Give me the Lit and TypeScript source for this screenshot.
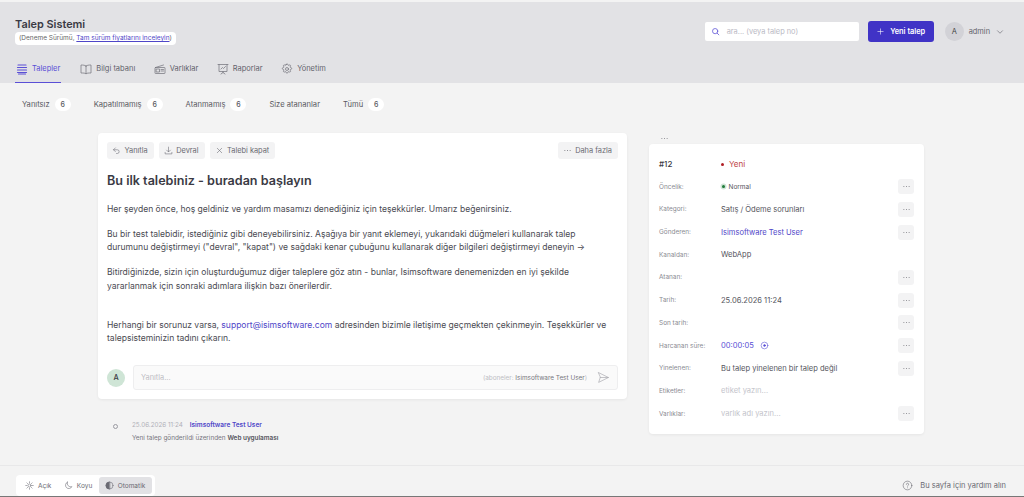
import { LitElement, html, css, svg } from 'lit';
import { customElement } from 'lit/decorators.js';

// ── Icons ─────────────────────────────────────────────────────────────────────

const icon = (size: number, body: unknown, sw = 1.5) => html`<svg
  width=${size}
  height=${size}
  viewBox="0 0 24 24"
  fill="none"
  stroke="currentColor"
  stroke-width=${sw}
  stroke-linecap="round"
  stroke-linejoin="round"
>${body}</svg>`;

const ICONS = {
  stack: svg`<path d="M4 4h16M3 9h18M3 14h18M3 19h18M5 22h14" stroke-width="2.4"/>`,
  book: svg`<path d="M12 6C10 4.500 7 4 2 4v16c5 0 8 0 10 1.500C14 20 17 20 22 20V4c-5 0-8 .5-10 2zM12 6v15.500"/>`,
  radio: svg`<rect x="2" y="9" width="20" height="12" rx="1"/><path d="M3 9l16-5M5 12h6v6H5zM14 13h5M14 16h5"/>`,
  chart: svg`<path d="M2 3h20M4 3v14h16V3M8 12l3-3 2 2 4-4M12 17v2M8 22l4-3 4 3"/>`,
  gear: svg`<circle cx="12" cy="12" r="3"/><path d="M10.300 3.300a1.700 1.700 0 0 1 3.400 0 1.700 1.700 0 0 0 2.600 1 1.700 1.700 0 0 1 2.400 2.400 1.700 1.700 0 0 0 1 2.600 1.700 1.700 0 0 1 0 3.400 1.700 1.700 0 0 0-1 2.600 1.700 1.700 0 0 1-2.400 2.400 1.700 1.700 0 0 0-2.600 1 1.700 1.700 0 0 1-3.400 0 1.700 1.700 0 0 0-2.600-1 1.700 1.700 0 0 1-2.400-2.400 1.700 1.700 0 0 0-1-2.600 1.700 1.700 0 0 1 0-3.400 1.700 1.700 0 0 0 1-2.600 1.700 1.700 0 0 1 2.400-2.400 1.700 1.700 0 0 0 2.600-1z"/>`,
  search: svg`<circle cx="11" cy="11" r="7"/><path d="M16.500 16.500L21 21"/>`,
  plus: svg`<path d="M12 5v14M5 12h14"/>`,
  chevron: svg`<path d="M6 9l6 6 6-6"/>`,
  reply: svg`<path d="M9 5L4 10l5 5M4 10h10a5 5 0 0 1 0 10h-2"/>`,
  download: svg`<path d="M12 3v12M7 11l5 5 5-5M3 17v4h18v-4"/>`,
  close: svg`<path d="M6 6l12 12M18 6L6 18"/>`,
  dots: svg`<path d="M5 12h.01M12 12h.01M19 12h.01" stroke-width="2.500"/>`,
  send: svg`<path d="M3 3l18 9-18 9 3-9zM6 12h15"/>`,
  sun: svg`<circle cx="12" cy="12" r="4"/><path d="M12 2v3M12 19v3M2 12h3M19 12h3M5 5l2 2M17 17l2 2M5 19l2-2M17 7l2-2"/>`,
  moon: svg`<path d="M9 3a9 9 0 1 0 12 12C13 17 7 11 9 3z"/>`,
  half: svg`<circle cx="12" cy="12" r="9.500"/><path d="M12 2.500a9.500 9.500 0 0 0 0 19z" fill="currentColor"/>`,
  help: svg`<circle cx="12" cy="12" r="9.500"/><path d="M9.500 9.500a2.500 2.500 0 1 1 3.500 2.300c-.7.4-1 .9-1 1.700M12 17h.01"/>`,
  timer: svg`<circle cx="12" cy="12" r="9"/><circle cx="12" cy="12" r="2.500" fill="currentColor"/>`,
};

const NAV = [
  { label: 'Talepler', icon: ICONS.stack, active: true },
  { label: 'Bilgi tabanı', icon: ICONS.book },
  { label: 'Varlıklar', icon: ICONS.radio },
  { label: 'Raporlar', icon: ICONS.chart },
  { label: 'Yönetim', icon: ICONS.gear },
];

const FILTERS = [
  { label: 'Yanıtsız', count: 6 },
  { label: 'Kapatılmamış', count: 6 },
  { label: 'Atanmamış', count: 6 },
  { label: 'Size atananlar' },
  { label: 'Tümü', count: 6 },
];

// ── AppRoot ───────────────────────────────────────────────────────────────────

@customElement('app-root')
export class AppRoot extends LitElement {
  static styles = css`
    :host {
      display: block;
      height: 497px;
      overflow: hidden;
      background: #f3f3f3;
      color: #3a3a44;
      font-family: Inter, 'Noto Sans', sans-serif;
      font-size: 8.55px;
    }

    .page {
      height: 497px;
      display: flex;
      flex-direction: column;
    }

    a {
      color: #4f46c8;
      text-decoration: none;
    }

    /* header */
    header {
      flex: none;
      height: 81px;
      margin-top: 2px;
      background: #e2e2e5;
      padding: 0 15px;
      display: flex;
      flex-direction: column;
    }

    .top {
      display: flex;
      justify-content: space-between;
      height: 53px;
    }

    .brand {
      padding-top: 15px;
    }

    .brand h1 {
      margin: 0;
      font-size: 10.9px;
      line-height: 15px;
      font-weight: 600;
      color: #3a3a44;
    }

    .trial {
      display: inline-block;
      background: #fff;
      border-radius: 4px;
      padding: 0 4px;
      font-size: 6.5px;
      line-height: 13px;
      color: #666;
    }

    .trial a {
      text-decoration: underline;
    }

    .tools {
      display: flex;
      align-items: center;
      gap: 9px;
      padding: 19px 4px 0 0;
      height: 21px;
    }

    .search {
      width: 154px;
      height: 19px;
      background: #fff;
      border-radius: 2px;
      display: flex;
      align-items: center;
      gap: 7px;
      padding-left: 6px;
      box-sizing: border-box;
      color: #b9b9c4;
      font-size: 7.4px;
    }

    .search svg {
      color: #5a4fd6;
    }

    .new {
      width: 66px;
      height: 21px;
      background: #4033c6;
      color: #fff;
      border-radius: 3px;
      display: flex;
      align-items: center;
      justify-content: center;
      gap: 5px;
      font-size: 7.4px;
      font-weight: 600;
    }

    .user {
      display: flex;
      align-items: center;
      gap: 5px;
      margin-left: 2px;
      font-size: 7.4px;
      color: #62626c;
    }

    .user .avatar {
      width: 19px;
      height: 19px;
      border-radius: 50%;
      background: #d2d2d7;
      display: grid;
      place-items: center;
      font-size: 7.4px;
      color: #444;
    }

    nav {
      display: flex;
      gap: 16.500px;
      height: 28px;
    }

    nav .tab {
      display: flex;
      align-items: center;
      gap: 4px;
      height: 27px;
      padding: 0 1px;
      font-size: 7.5px;
      color: #62626c;
    }

    nav .tab svg {
      color: #77777f;
    }

    nav .tab.active {
      margin-right: 1.500px;
      color: #5a4fd6;
      border-bottom: 1px solid #5a4fd6;
    }

    nav .tab.active svg {
      color: #5a4fd6;
    }

    /* filters */
    .filters {
      flex: none;
      display: flex;
      gap: 23px;
      padding: 13px 22px 0;
      height: 17px;
      font-size: 7.6px;
      color: #5a5a62;
    }

    .filter {
      display: flex;
      align-items: center;
      gap: 5px;
    }

    .count {
      width: 16px;
      height: 13px;
      border-radius: 7px;
      background: #fff;
      display: grid;
      place-items: center;
      font-size: 7px;
      font-weight: 500;
    }

    /* content */
    .content {
      flex: 1;
      display: flex;
      align-items: flex-start;
      gap: 22px;
      padding: 20px 0 0 98px;
    }

    .main {
      width: 529px;
    }

    .card {
      background: #fff;
      border-radius: 4px;
      box-shadow: 0 1px 3px rgba(0, 0, 0, 0.06);
    }

    .ticket {
      padding: 9px 9px 9px;
      box-sizing: border-box;
      height: 266px;
      display: flex;
      flex-direction: column;
    }

    .actions {
      display: flex;
      gap: 5px;
    }

    .btn {
      display: flex;
      align-items: center;
      gap: 3.500px;
      height: 17px;
      padding: 0 6px 0 5px;
      background: #f3f3f4;
      border-radius: 3px;
      font-size: 7.4px;
      color: #6a6a72;
    }

    .actions .more {
      margin-left: auto;
    }

    h2 {
      margin: 14px 0 0;
      font-size: 12.6px;
      line-height: 16px;
      font-weight: 600;
      color: #3a3a44;
    }

    .body {
      margin-top: 13.500px;
      line-height: 13.300px;
      color: #4a4a52;
    }

    .body p {
      margin: 0 0 12px;
    }

    .body p.gap {
      margin-top: 26px;
    }

    .reply {
      display: flex;
      align-items: center;
      gap: 8px;
      margin-top: auto;
    }

    .reply .avatar {
      width: 18px;
      height: 18px;
      flex: none;
      border-radius: 50%;
      background: #cfe5d6;
      display: grid;
      place-items: center;
      font-size: 7.4px;
      font-weight: 500;
    }

    .input {
      flex: 1;
      height: 25px;
      padding: 0 7px;
      background: #fafafa;
      border: 1px solid #eeeeef;
      border-radius: 3px;
      display: flex;
      align-items: center;
      font-size: 7.4px;
      color: #bdbdc4;
      box-sizing: border-box;
    }

    .subs {
      margin-left: auto;
      font-size: 6.4px;
    }

    .subs b {
      font-weight: 400;
      color: #77777f;
    }

    .input svg {
      margin-left: 10px;
      color: #a5a5ac;
    }

    .event {
      display: flex;
      gap: 14px;
      padding: 22px 0 0 15px;
      font-size: 6.4px;
    }

    .event .dot {
      width: 3px;
      height: 3px;
      margin-top: 3px;
      border: 1px solid #9a9aa2;
      border-radius: 50%;
    }

    .event .when {
      font-size: 6.3px;
      color: #b0b0b8;
      margin-right: 7px;
    }

    .event a {
      font-size: 6.5px;
      font-weight: 600;
    }

    .event .what {
      margin-top: 5px;
      color: #77777f;
    }

    .event .what b {
      font-weight: 600;
      color: #55555d;
    }

    /* side panel */
    .side {
      width: 275px;
    }

    .side .dots {
      height: 11px;
      padding-left: 11px;
      color: #77777f;
      display: flex;
      align-items: center;
    }

    .panel {
      padding: 8.700px 10px 9px 10px;
      height: 290px;
      box-sizing: border-box;
    }

    .row {
      display: grid;
      grid-template-columns: 62px 1fr 16px;
      align-items: center;
      height: 22.700px;
      font-size: 7.55px;
      color: #55555d;
    }

    .row .key {
      font-size: 6.45px;
      color: #8a8a92;
    }

    .row .mini {
      width: 16px;
      height: 15px;
      background: #f3f3f4;
      border-radius: 3px;
      display: grid;
      place-items: center;
      color: #77777f;
    }

    .row .key.id {
      font-size: 8px;
      font-weight: 500;
      color: #3a3a44;
    }

    .status {
      display: flex;
      align-items: center;
      gap: 5px;
      font-size: 8.1px;
      color: #c0474a;
    }

    .status i {
      width: 3px;
      height: 3px;
      border-radius: 50%;
      background: #b01e24;
    }

    .prio {
      display: flex;
      align-items: center;
      gap: 3.500px;
      font-size: 6.5px;
    }

    .prio i {
      width: 3px;
      height: 3px;
      margin-left: 1px;
      border-radius: 50%;
      background: #1f7a3a;
      box-shadow: 0 0 0 1.500px #cfe5d6;
    }

    .timer {
      display: flex;
      align-items: center;
      gap: 6px;
      color: #5a4fd6;
    }

    .hint {
      color: #c4c4cb;
    }

    /* footer */
    footer {
      flex: none;
      height: 31px;
      border-top: 1px solid #e8e8e9;
      padding: 9px 16px 0;
      box-sizing: border-box;
      display: flex;
      align-items: center;
      justify-content: space-between;
      font-size: 6.5px;
      color: #6a6a72;
    }

    .page-end {
      flex: none;
      height: 1px;
      background: #777;
    }

    .theme {
      display: flex;
      align-items: center;
      height: 21px;
      box-sizing: border-box;
      background: #fff;
      border-radius: 4px;
      padding: 0 3px;
    }

    .theme span {
      display: flex;
      align-items: center;
      gap: 4px;
      height: 17px;
      padding: 0 6.500px 0 6px;
      border-radius: 3px;
    }

    .theme .on {
      background: #e2e2e5;
    }

    .help {
      display: flex;
      align-items: center;
      gap: 7px;
      font-size: 7.5px;
      padding-right: 2px;
    }
  `;

  private row(key: string, value: unknown, more = true, keyClass = '') {
    return html`<div class="row">
      <span class="key ${keyClass}">${key}</span>
      <span>${value}</span>
      ${more ? html`<span class="mini">${icon(9, ICONS.dots)}</span>` : html`<span></span>`}
    </div>`;
  }

  render() {
    return html`
      <div class="page">
        <header>
          <div class="top">
            <div class="brand">
              <h1>Talep Sistemi</h1>
              <span class="trial">(Deneme Sürümü, <a href="#">Tam sürüm fiyatlarını inceleyin</a>)</span>
            </div>
            <div class="tools">
              <div class="search">${icon(9, ICONS.search, 2)}<span>ara... (veya talep no)</span></div>
              <div class="new">${icon(9, ICONS.plus)}<span>Yeni talep</span></div>
              <div class="user">
                <span class="avatar">A</span><span>admin</span>${icon(10, ICONS.chevron)}
              </div>
            </div>
          </div>
          <nav>
            ${NAV.map(
              (n) => html`<div class="tab ${n.active ? 'active' : ''}">${icon(12, n.icon)}<span>${n.label}</span></div>`,
            )}
          </nav>
        </header>

        <div class="filters">
          ${FILTERS.map(
            (f) => html`<div class="filter">
              <span>${f.label}</span>${f.count ? html`<span class="count">${f.count}</span>` : ''}
            </div>`,
          )}
        </div>

        <div class="content">
          <div class="main">
            <div class="card ticket">
              <div class="actions">
                <div class="btn">${icon(9, ICONS.reply)}Yanıtla</div>
                <div class="btn">${icon(9, ICONS.download)}Devral</div>
                <div class="btn">${icon(9, ICONS.close)}Talebi kapat</div>
                <div class="btn more">${icon(9, ICONS.dots)}Daha fazla</div>
              </div>
              <h2>Bu ilk talebiniz - buradan başlayın</h2>
              <div class="body">
                <p>Her şeyden önce, hoş geldiniz ve yardım masamızı denediğiniz için teşekkürler. Umarız beğenirsiniz.</p>
                <p>Bu bir test talebidir, istediğiniz gibi deneyebilirsiniz. Aşağıya bir yanıt eklemeyi, yukarıdaki düğmeleri kullanarak talep durumunu değiştirmeyi ("devral", "kapat") ve sağdaki kenar çubuğunu kullanarak diğer bilgileri değiştirmeyi deneyin →</p>
                <p>Bitirdiğinizde, sizin için oluşturduğumuz diğer taleplere göz atın - bunlar, Isimsoftware denemenizden en iyi şekilde yararlanmak için sonraki adımlara ilişkin bazı önerilerdir.</p>
                <p class="gap">Herhangi bir sorunuz varsa, <a href="#">support@isimsoftware.com</a> adresinden bizimle iletişime geçmekten çekinmeyin. Teşekkürler ve talepsisteminizin tadını çıkarın.</p>
              </div>
              <div class="reply">
                <span class="avatar">A</span>
                <div class="input">
                  <span>Yanıtla...</span>
                  <span class="subs">(aboneler: <b>Isimsoftware Test User</b>)</span>
                  ${icon(13, ICONS.send, 1.2)}
                </div>
              </div>
            </div>
            <div class="event">
              <span class="dot"></span>
              <div>
                <div><span class="when">25.06.2026 11:24</span><a href="#">Isimsoftware Test User</a></div>
                <div class="what">Yeni talep gönderildi üzerinden <b>Web uygulaması</b></div>
              </div>
            </div>
          </div>

          <div class="side">
            <div class="dots">${icon(9, ICONS.dots)}</div>
            <div class="card panel">
              ${this.row('#12', html`<span class="status"><i></i>Yeni</span>`, false, 'id')}
              ${this.row('Öncelik:', html`<span class="prio"><i></i>Normal</span>`)}
              ${this.row('Kategori:', 'Satış / Ödeme sorunları')}
              ${this.row('Gönderen:', html`<a href="#">Isimsoftware Test User</a>`)}
              ${this.row('Kanaldan:', 'WebApp', false)}
              ${this.row('Atanan:', '')}
              ${this.row('Tarih:', '25.06.2026 11:24')}
              ${this.row('Son tarih:', '')}
              ${this.row('Harcanan süre:', html`<span class="timer">00:00:05 ${icon(9, ICONS.timer)}</span>`)}
              ${this.row('Yinelenen:', 'Bu talep yinelenen bir talep değil')}
              ${this.row('Etiketler:', html`<span class="hint">etiket yazın...</span>`, false)}
              ${this.row('Varlıklar:', html`<span class="hint">varlık adı yazın...</span>`)}
            </div>
          </div>
        </div>

        <footer>
          <div class="theme">
            <span>${icon(9, ICONS.sun)}Açık</span>
            <span>${icon(9, ICONS.moon)}Koyu</span>
            <span class="on">${icon(9, ICONS.half)}Otomatik</span>
          </div>
          <div class="help">${icon(11, ICONS.help, 1.3)}Bu sayfa için yardım alın</div>
        </footer>
        <div class="page-end"></div>
      </div>
    `;
  }
}
